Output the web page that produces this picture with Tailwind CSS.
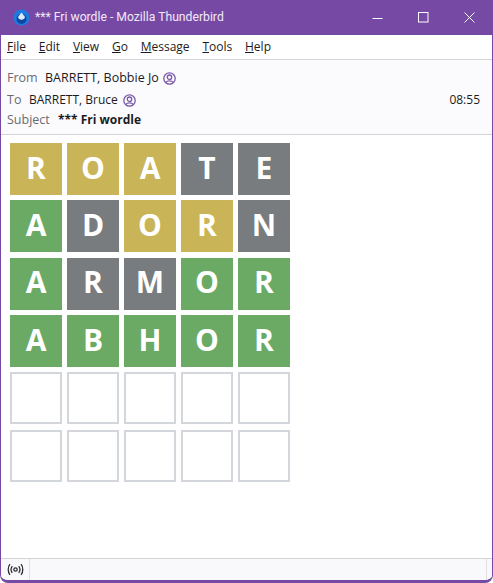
<!DOCTYPE html>
<html lang="en">
  <head>
    <meta charset="UTF-8" />
    <meta name="viewport" content="width=device-width, initial-scale=1.0" />
    <title>*** Fri wordle - Mozilla Thunderbird</title>
    <script src="https://cdn.jsdelivr.net/npm/@tailwindcss/browser@4"></script>
  </head>
  <body class="bg-white">
    <div class="flex flex-col h-[583px] w-[493px] overflow-hidden bg-white border-x border-b-[3px] border-[#7649a5] rounded-b-[8px] font-['Open_Sans','Noto_Sans',sans-serif] text-[#1c1b22]">
      <!-- title bar -->
      <div class="flex items-center h-[35px] -mx-px shrink-0 bg-[#7649a5] text-white">
        <svg class="ml-[13px] w-[17px] h-[17px]" viewBox="0 0 17 17">
          <circle cx="8.5" cy="8.5" r="8" fill="#1f7ae0" />
          <circle cx="8.5" cy="10" r="5" fill="#0d47a1" />
          <path d="M5 8 L8.5 3.5 L12 8 A3.6 3.6 0 0 1 5 8 Z" fill="#d9ecfb" />
        </svg>
        <span class="ml-[5px] text-[12.2px] leading-none whitespace-nowrap text-[#f1e9f8] font-['Roboto',sans-serif]">*** Fri wordle - Mozilla Thunderbird</span>
        <div class="ml-auto flex items-center gap-[35px] mr-[18px]">
          <svg class="w-[11px] h-[11px]" viewBox="0 0 11 11"><path d="M0.5 6.5 H10.5" stroke="#fff" fill="none" /></svg>
          <svg class="w-[11px] h-[11px]" viewBox="0 0 11 11"><rect x="0.5" y="0.5" width="9.5" height="9.5" stroke="#fff" fill="none" /></svg>
          <svg class="w-[11px] h-[11px]" viewBox="0 0 11 11"><path d="M0.5 0.5 L10.5 10.5 M10.5 0.5 L0.5 10.5" stroke="#fff" fill="none" /></svg>
        </div>
      </div>

      <!-- menu bar -->
      <div class="flex items-center h-[25px] shrink-0 pl-[6px] gap-[12.8px] text-[12px] bg-white border-b border-[#d4d4d6]">
        <span><u>F</u>ile</span>
        <span><u>E</u>dit</span>
        <span><u>V</u>iew</span>
        <span><u>G</u>o</span>
        <span><u>M</u>essage</span>
        <span><u>T</u>ools</span>
        <span><u>H</u>elp</span>
      </div>

      <!-- message header -->
      <div class="flex flex-col h-[75px] shrink-0 pl-[6px] pr-[12px] pt-[7px] text-[12.5px] bg-[#fbfbfe] border-b border-[#d4d4d6]">
        <div class="flex items-center h-[22px]">
          <span class="w-[38px] text-[#6b6a70]">From</span>
          <span>BARRETT, Bobbie Jo</span>
          <svg class="ml-[4px] w-[13px] h-[13px]" viewBox="0 0 13 13" fill="none" stroke="#7a5aa8" stroke-width="1.3">
            <circle cx="6.5" cy="6.5" r="5.7" />
            <circle cx="6.5" cy="5.2" r="2.2" />
            <path d="M2.8 10.5 C4 8.4 9 8.4 10.2 10.5" />
          </svg>
        </div>
        <div class="flex items-center h-[22px]">
          <span class="w-[22px] text-[#6b6a70]">To</span>
          <span class="text-[12px]">BARRETT, Bruce</span>
          <svg class="ml-[5px] w-[13px] h-[13px]" viewBox="0 0 13 13" fill="none" stroke="#7a5aa8" stroke-width="1.3">
            <circle cx="6.5" cy="6.5" r="5.7" />
            <circle cx="6.5" cy="5.2" r="2.2" />
            <path d="M2.8 10.5 C4 8.4 9 8.4 10.2 10.5" />
          </svg>
          <span class="ml-auto text-[12px]">08:55</span>
        </div>
        <div class="flex items-center h-[18px]">
          <span class="w-[51px] text-[#6b6a70]">Subject</span>
          <span class="font-bold text-[12px]">*** Fri wordle</span>
        </div>
      </div>

      <!-- wordle grid -->
      <div class="flex-1 pl-[9px] pt-[8px] bg-white">
        <div class="grid grid-cols-[repeat(5,52px)] auto-rows-[52px] gap-x-[5px] gap-y-[5.35px] text-[30px] leading-none font-bold text-white font-['Open_Sans',sans-serif]">
          <div class="flex items-center justify-center pb-[3px] bg-[#c9b458]">R</div>
          <div class="flex items-center justify-center pb-[3px] bg-[#c9b458]">O</div>
          <div class="flex items-center justify-center pb-[3px] bg-[#c9b458]">A</div>
          <div class="flex items-center justify-center pb-[3px] bg-[#787c7e]">T</div>
          <div class="flex items-center justify-center pb-[3px] bg-[#787c7e]">E</div>

          <div class="flex items-center justify-center pb-[3px] bg-[#6aaa64]">A</div>
          <div class="flex items-center justify-center pb-[3px] bg-[#787c7e]">D</div>
          <div class="flex items-center justify-center pb-[3px] bg-[#c9b458]">O</div>
          <div class="flex items-center justify-center pb-[3px] bg-[#c9b458]">R</div>
          <div class="flex items-center justify-center pb-[3px] bg-[#787c7e]">N</div>

          <div class="flex items-center justify-center pb-[3px] bg-[#6aaa64]">A</div>
          <div class="flex items-center justify-center pb-[3px] bg-[#787c7e]">R</div>
          <div class="flex items-center justify-center pb-[3px] bg-[#787c7e]">M</div>
          <div class="flex items-center justify-center pb-[3px] bg-[#6aaa64]">O</div>
          <div class="flex items-center justify-center pb-[3px] bg-[#6aaa64]">R</div>

          <div class="flex items-center justify-center pb-[3px] bg-[#6aaa64]">A</div>
          <div class="flex items-center justify-center pb-[3px] bg-[#6aaa64]">B</div>
          <div class="flex items-center justify-center pb-[3px] bg-[#6aaa64]">H</div>
          <div class="flex items-center justify-center pb-[3px] bg-[#6aaa64]">O</div>
          <div class="flex items-center justify-center pb-[3px] bg-[#6aaa64]">R</div>

          <div class="border-2 border-[#d3d6da]"></div>
          <div class="border-2 border-[#d3d6da]"></div>
          <div class="border-2 border-[#d3d6da]"></div>
          <div class="border-2 border-[#d3d6da]"></div>
          <div class="border-2 border-[#d3d6da]"></div>

          <div class="border-2 border-[#d3d6da]"></div>
          <div class="border-2 border-[#d3d6da]"></div>
          <div class="border-2 border-[#d3d6da]"></div>
          <div class="border-2 border-[#d3d6da]"></div>
          <div class="border-2 border-[#d3d6da]"></div>
        </div>
      </div>

      <!-- status bar -->
      <div class="flex h-[22px] shrink-0 bg-[#f9f9fb] border-t border-[#d4d4d6]">
        <div class="flex items-center justify-center w-[29px] border-r border-[#e0e0e2]">
          <svg class="w-[17px] h-[13px]" viewBox="0 0 16 12" fill="none" stroke="#2b2a33" stroke-width="1.2">
            <circle cx="8" cy="6" r="1.6" />
            <path d="M5 2.8 C3.6 4.6 3.6 7.4 5 9.2 M11 2.8 C12.4 4.6 12.4 7.4 11 9.2" />
            <path d="M2.8 1 C0.6 3.6 0.6 8.4 2.8 11 M13.2 1 C15.4 3.6 15.4 8.4 13.2 11" />
          </svg>
        </div>
        <div class="flex-1"></div>
        <div class="w-[2px] mr-[5px] border-r border-[#e0e0e2]"></div>
      </div>
    </div>
  </body>
</html>
